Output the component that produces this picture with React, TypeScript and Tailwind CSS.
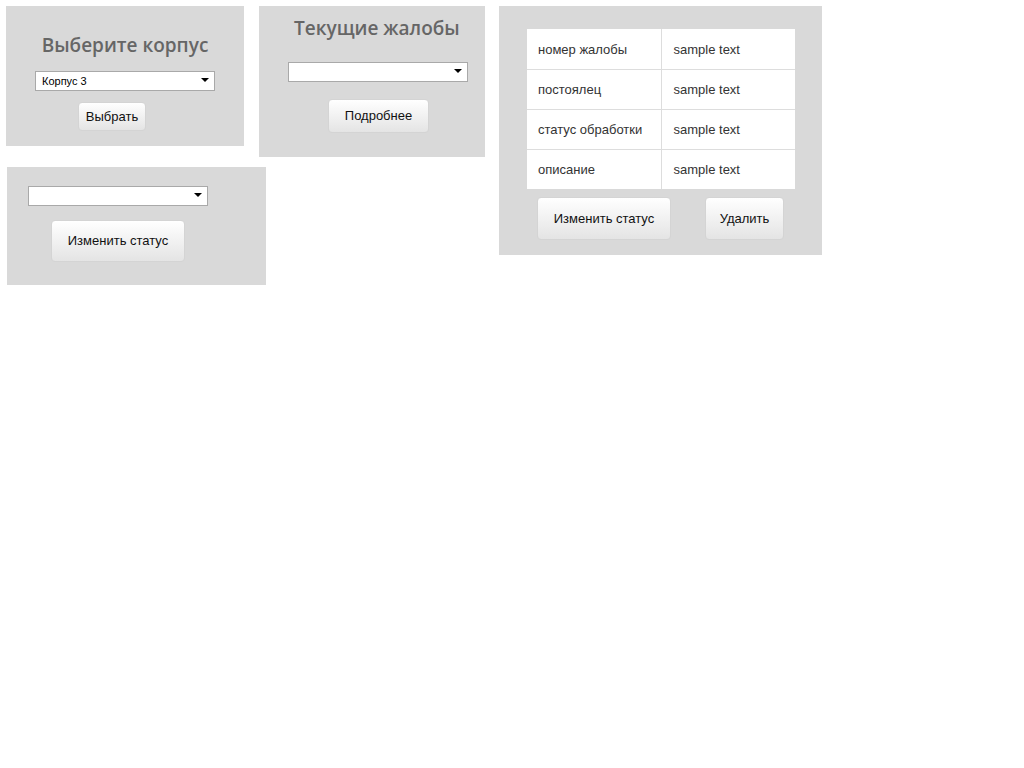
import React from "react";

const Select = ({ value = "", className = "" }: { value?: string; className?: string }) => (
  <div className={"relative h-5 w-[180px] shrink-0 border border-[#a9a9a9] bg-white " + className}>
    <span className="absolute left-[6px] top-[1px] font-['Liberation_Sans',Arial,sans-serif] text-[11px] leading-4 text-black">
      {value}
    </span>
    {/* dropdown arrow */}
    <span className="absolute right-[5px] top-[6px] h-0 w-0 border-x-4 border-t-4 border-x-transparent border-t-black" />
  </div>
);

const Button = ({ children, className = "" }: { children: React.ReactNode; className?: string }) => (
  <button
    className={
      "shrink-0 rounded-[4px] border border-[#d4d4d4] bg-gradient-to-b from-white to-[#e4e4e4] font-['Liberation_Sans',Arial,sans-serif] text-[13px] text-[#111] " +
      className
    }
  >
    {children}
  </button>
);

const Heading = ({ children, className = "" }: { children: React.ReactNode; className?: string }) => (
  <h2 className={"whitespace-nowrap font-['Open_Sans',sans-serif] text-[19px] font-semibold text-[#666] " + className}>
    {children}
  </h2>
);

const rows = ["номер жалобы", "постоялец", "статус обработки", "описание"];

export default function App() {
  return (
    <div className="flex items-start bg-white p-[6px]">
      <div className="flex w-[238px] shrink-0 flex-col">
        {/* Выбор корпуса */}
        <div className="flex h-[140px] w-[238px] shrink-0 flex-col bg-[#d9d9d9]">
          <Heading className="mt-[27px] text-center leading-6">Выберите корпус</Heading>
          <Select value="Корпус 3" className="ml-[29px] mt-[14px]" />
          <Button className="ml-[72px] mt-[11px] h-[29px] w-[68px]">Выбрать</Button>
        </div>

        {/* Изменение статуса */}
        <div className="ml-px mt-[21px] flex h-[118px] w-[259px] shrink-0 flex-col bg-[#d9d9d9]">
          <Select className="ml-[21px] mt-[19px]" />
          <Button className="ml-[44px] mt-[14px] h-[42px] w-[134px]">Изменить статус</Button>
        </div>
      </div>

      {/* Текущие жалобы */}
      <div className="ml-[15px] flex h-[151px] w-[226px] shrink-0 flex-col bg-[#d9d9d9]">
        <Heading className="ml-[35px] mt-[10px] leading-6">Текущие жалобы</Heading>
        <Select className="ml-[29px] mt-[22px]" />
        <Button className="ml-[69px] mt-[17px] h-[34px] w-[101px]">Подробнее</Button>
      </div>

      {/* Детали жалобы */}
      <div className="ml-[14px] flex h-[249px] w-[323px] shrink-0 flex-col bg-[#d9d9d9]">
        <table className="ml-[28px] mt-[23px] w-[268px] border-collapse bg-white font-['Liberation_Sans',Arial,sans-serif] text-[13px] text-[#333]">
          <tbody>
            {rows.map((r, i) => (
              <tr key={r} className={i > 0 ? "border-t border-[#dddddd]" : ""}>
                <td className="h-10 w-[134px] border-r border-[#dddddd] pl-[11px] pt-px">{r}</td>
                <td className="h-10 pl-[12px] pt-px">sample text</td>
              </tr>
            ))}
          </tbody>
        </table>
        <div className="ml-[38px] mt-[8px] flex">
          <Button className="h-[43px] w-[134px]">Изменить статус</Button>
          <Button className="ml-[34px] h-[43px] w-[79px]">Удалить</Button>
        </div>
      </div>
    </div>
  );
}
